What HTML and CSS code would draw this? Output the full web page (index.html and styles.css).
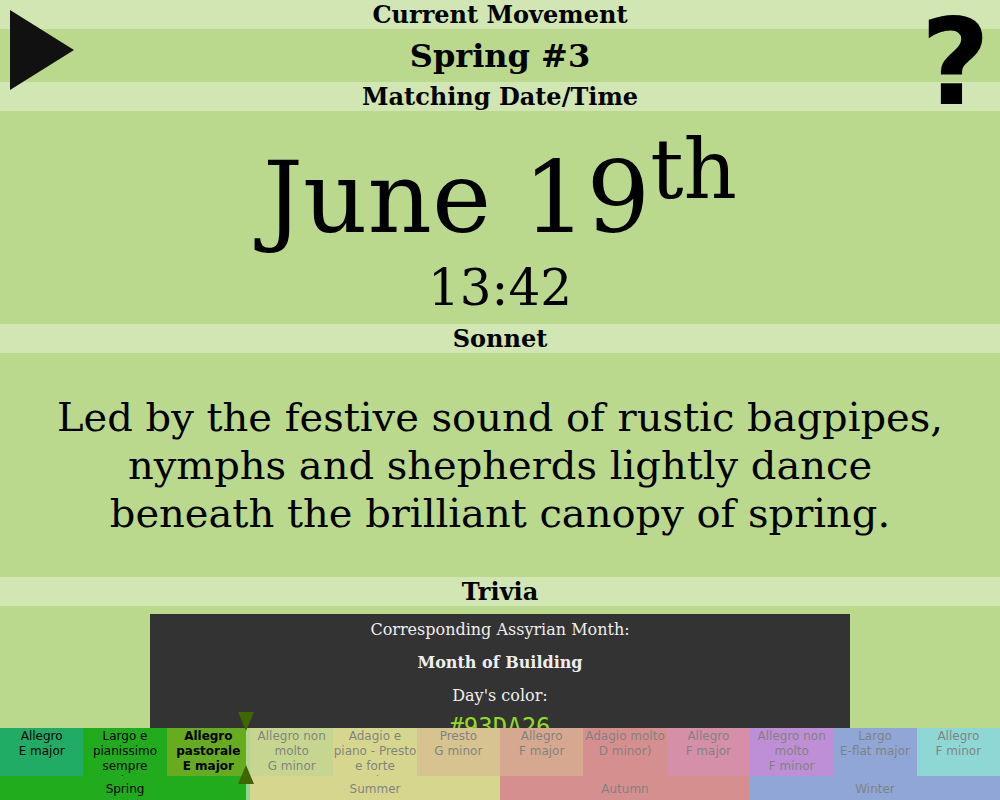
FILE: index.html
```html
<!DOCTYPE html>
<html lang="en">
<head>
<meta charset="utf-8">
<title>Four Seasons</title>
<link rel="stylesheet" href="styles.css">
</head>
<body>
<button class="play" type="button" aria-label="Play"><svg class="play-icon" viewBox="0 0 64 80" aria-hidden="true"><path d="M0 0L64 40L0 80Z"/></svg></button>
<a class="help" href="#help" aria-label="Help">?</a>
<main>
<h2 class="bar">Current Movement</h2>
<p class="movement">Spring #3</p>
<h2 class="bar">Matching Date/Time</h2>
<div class="moment">
<p class="date">June 19<sup class="ordinal">th</sup></p>
<p class="time">13:42</p>
</div>
<h2 class="bar">Sonnet</h2>
<p class="sonnet">Led by the festive sound of rustic bagpipes, nymphs and shepherds lightly dance beneath the brilliant canopy of spring.</p>
<h2 class="bar">Trivia</h2>
<section class="trivia">
<p class="fact">Corresponding Assyrian Month:</p>
<p class="fact"><strong>Month of Building</strong></p>
<p class="fact">Day's color:</p>
<p class="swatch">#93DA26</p>
</section>
</main>
<footer class="timeline">
<section class="season spring">
<div class="parts">
<div class="part teal">Allegro<br>E major</div>
<div class="part">Largo e pianissimo sempre<br>C-sharp minor</div>
<div class="part olive current">Allegro pastorale<br>E major</div>
</div>
<div class="name">Spring</div>
</section>
<section class="season summer">
<div class="parts">
<div class="part lime">Allegro non molto<br>G minor</div>
<div class="part">Adagio e piano - Presto e forte<br>G minor</div>
<div class="part amber">Presto<br>G minor</div>
</div>
<div class="name">Summer</div>
</section>
<section class="season autumn">
<div class="parts">
<div class="part orange">Allegro<br>F major</div>
<div class="part">Adagio molto<br>D minor)</div>
<div class="part pink">Allegro<br>F major</div>
</div>
<div class="name">Autumn</div>
</section>
<section class="season winter">
<div class="parts">
<div class="part purple">Allegro non molto<br>F minor</div>
<div class="part">Largo<br>E-flat major</div>
<div class="part cyan">Allegro<br>F minor</div>
</div>
<div class="name">Winter</div>
</section>
<div class="remaining"></div>
<svg class="marker" viewBox="0 0 16 72" aria-hidden="true"><path d="M0 0H16L8 19ZM0 72H16L8 53Z"/></svg>
</footer>
</body>
</html>
```
FILE: styles.css
```css
* { box-sizing: border-box; }
body {
  margin: 0;
  padding-bottom: 72px;
  background: #bad98c;
  color: #000;
  font-family: "DejaVu Serif", serif;
  text-align: center;
}
p, h2 { margin: 0; }
.bar {
  background: #d1e6b2;
  font-size: 24px;
  line-height: 29px;
}
.movement {
  padding: 9px 0 7px;
  font-size: 32px;
  font-weight: bold;
  line-height: 37px;
}
.moment { padding: 25px 0 7px; }
.date {
  font-size: 100px;
  line-height: 123px;
}
.ordinal {
  font-size: 83px;
  line-height: 0;
}
.time {
  font-size: 50px;
  line-height: 58px;
}
.sonnet {
  padding: 40px;
  font-size: 40px;
  line-height: 48px;
}
.trivia {
  width: 70%;
  margin: 8px auto 0;
  padding-bottom: 16px;
  background: #333;
  color: #eee;
}
.fact {
  padding: 6px 0 8px;
  font-size: 16px;
  line-height: 19px;
}
.swatch {
  color: #93da26;
  font-family: "DejaVu Sans Mono", monospace;
  font-size: 24px;
  line-height: 28px;
}
.play {
  position: fixed;
  top: 10px;
  left: 10px;
  padding: 0;
  border: 0;
  background: none;
  cursor: pointer;
}
.play-icon {
  display: block;
  width: 64px;
  fill: #111;
}
.help {
  position: fixed;
  top: 0;
  right: 10px;
  color: #000;
  font-family: "DejaVu Sans", sans-serif;
  font-size: 120px;
  font-weight: bold;
  line-height: 126px;
  text-decoration: none;
}
.timeline {
  position: fixed;
  right: 0;
  bottom: 0;
  left: 0;
  display: grid;
  grid-template-columns: repeat(4, 1fr);
  font-family: "DejaVu Sans", sans-serif;
  font-size: 12px;
}
.parts {
  display: grid;
  grid-template-columns: repeat(3, 1fr);
  height: 48px;
}
.part {
  height: 48px;
  padding-top: 1px;
  overflow: hidden;
  line-height: 15px;
}
.name {
  padding-top: 2px;
  line-height: 22px;
}
.current { font-weight: bold; }
.spring { background: #21ac1e; }
.summer { background: #adad1e; }
.autumn { background: #ac1e1e; }
.winter { background: #1e4dac; }
.teal { background: #21ac66; }
.olive { background: #66ac1e; }
.lime { background: #8dad21; }
.amber { background: #ad861e; }
.orange { background: #ac511e; }
.pink { background: #ac1e51; }
.purple { background: #7d1eac; }
.cyan { background: #1eaeaa; }
.remaining {
  position: absolute;
  top: 0;
  right: 0;
  bottom: 0;
  width: 75.4%;
  background: #ffffff80;
}
.marker {
  position: absolute;
  right: 75.4%;
  bottom: 16px;
  width: 16px;
  margin-right: -8px;
  fill: #406600;
}
```
